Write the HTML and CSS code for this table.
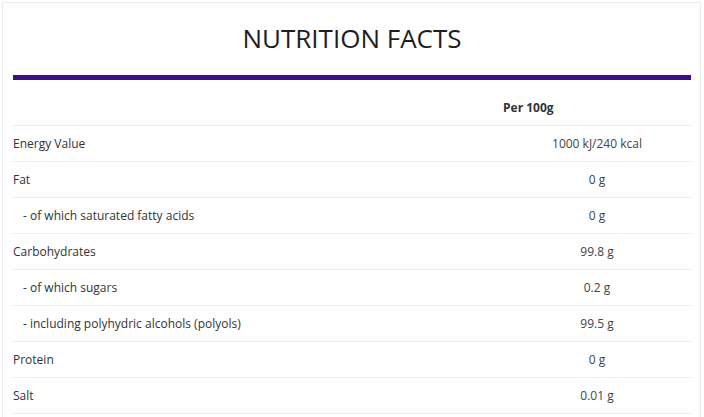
FILE: index.html
```html
<!DOCTYPE html>
<html>
<head>
<meta charset="utf-8">
<link rel="stylesheet" href="styles.css">
</head>
<body>
<div class="card">
  <h2 class="title">NUTRITION FACTS</h2>
  <div class="bar"></div>
  <table class="facts">
    <thead>
      <tr><th class="label"></th><th class="value">Per 100g</th></tr>
    </thead>
    <tbody>
      <tr><td class="label">Energy Value</td><td class="value">1000 kJ/240 kcal</td></tr>
      <tr><td class="label">Fat</td><td class="value">0 g</td></tr>
      <tr><td class="label sub">- of which saturated fatty acids</td><td class="value">0 g</td></tr>
      <tr><td class="label">Carbohydrates</td><td class="value">99.8 g</td></tr>
      <tr><td class="label sub">- of which sugars</td><td class="value">0.2 g</td></tr>
      <tr><td class="label sub">- including polyhydric alcohols (polyols)</td><td class="value">99.5 g</td></tr>
      <tr><td class="label">Protein</td><td class="value">0 g</td></tr>
      <tr><td class="label">Salt</td><td class="value">0.01 g</td></tr>
    </tbody>
  </table>
</div>
</body>
</html>
```

FILE: styles.css
```css
html, body {
  margin: 0;
  padding: 0;
  background: #fff;
}
body {
  font-family: "Open Sans", "Liberation Sans", sans-serif;
  color: #333;
}
.card {
  margin: 2px 0 0 2px;
  width: 699px;
  border: 1px solid #ececec;
  border-bottom: none;
  padding: 0 9px 20px 10px;
  box-sizing: border-box;
}
.title {
  margin: 0;
  padding: 17px 0 0;
  height: 55px;
  text-align: center;
  font-size: 26px;
  font-weight: 400;
  color: #1e1e1e;
  line-height: 36px;
  box-sizing: content-box;
}
.bar {
  height: 5px;
  background: #3c0f87;
}
.facts {
  width: 100%;
  border-collapse: collapse;
  font-size: 12px;
}
.facts th, .facts td {
  height: 35px;
  padding: 0;
  border-bottom: 1px solid #ededed;
  vertical-align: middle;
}
.facts thead th {
  height: 36px;
  padding-bottom: 9px;
  vertical-align: bottom;
  font-weight: 700;
  text-align: left;
  color: #333;
}
.facts .value {
  width: 188px;
  text-align: center;
  color: #444;
}
.facts thead .value {
  text-align: left;
  color: #333;
}
.facts td.label {
  text-align: left;
}
.facts .sub {
  padding-left: 10px;
}
```
